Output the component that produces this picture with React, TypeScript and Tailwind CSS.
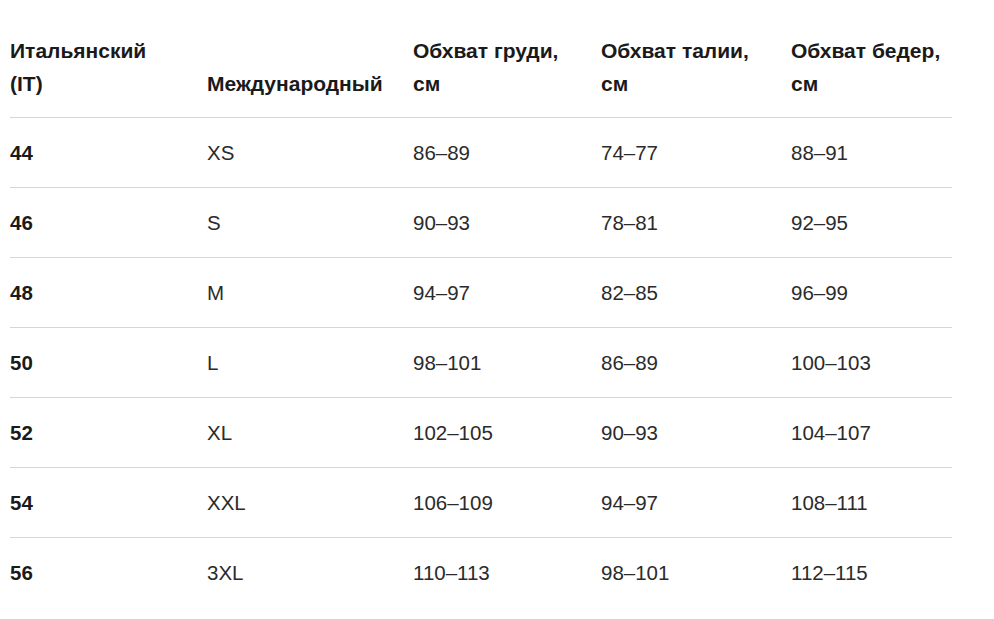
const header: string[][] = [
  ['Итальянский', '(IT)'],
  ['Международный'],
  ['Обхват груди,', 'см'],
  ['Обхват талии,', 'см'],
  ['Обхват бедер,', 'см'],
]

const rows: string[][] = [
  ['44', 'XS', '86–89', '74–77', '88–91'],
  ['46', 'S', '90–93', '78–81', '92–95'],
  ['48', 'M', '94–97', '82–85', '96–99'],
  ['50', 'L', '98–101', '86–89', '100–103'],
  ['52', 'XL', '102–105', '90–93', '104–107'],
  ['54', 'XXL', '106–109', '94–97', '108–111'],
  ['56', '3XL', '110–113', '98–101', '112–115'],
]

const cols = 'grid grid-cols-[197px_206px_188px_190px_161px]'

export default function App() {
  return (
    <div className="w-[994px] h-[619px] bg-white overflow-hidden font-['Liberation_Sans',Arial,sans-serif]">
      <div className="ml-[10px] mt-[17px] w-[942px]">
        {/* Header */}
        <div className={`${cols} border-b border-[#d6d6d6] py-[17px] items-end`}>
          {header.map((h) => (
            <div key={h[0]} className="text-[21px] font-bold leading-[33px] text-[#1a1a1a] whitespace-nowrap">
              {h.map((line) => (
                <div key={line}>{line}</div>
              ))}
            </div>
          ))}
        </div>

        {/* Body */}
        {rows.map((r, i) => (
          <div
            key={r[0]}
            className={`${cols} py-[18px] ${i < rows.length - 1 ? 'border-b border-[#d6d6d6]' : ''}`}
          >
            {r.map((c, j) => (
              <div
                key={j}
                className={`text-[20.5px] leading-[33px] ${j === 0 ? 'font-bold text-[#1a1a1a]' : 'text-[#2b2b2b]'}`}
              >
                {c}
              </div>
            ))}
          </div>
        ))}
      </div>
    </div>
  )
}
